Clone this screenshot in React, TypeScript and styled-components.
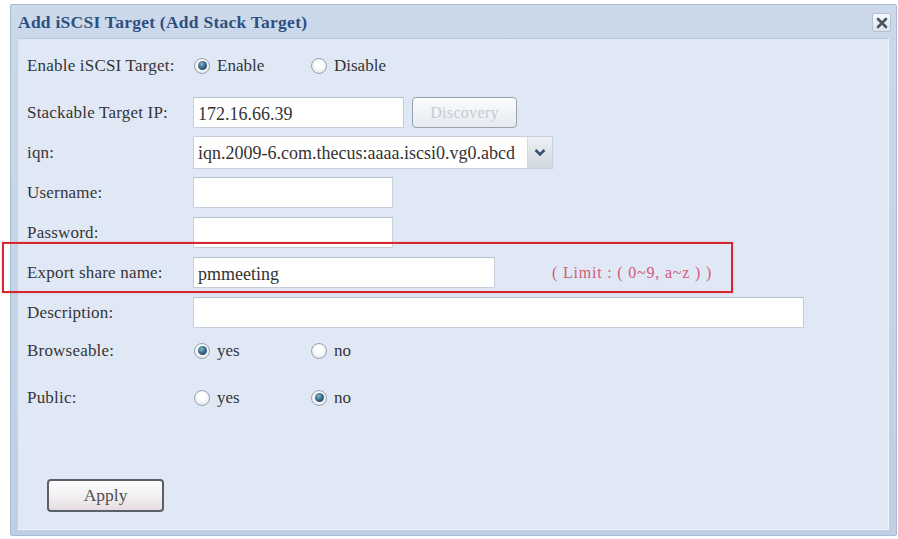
import React from 'react';
import styled, { createGlobalStyle } from 'styled-components';

const GlobalStyle = createGlobalStyle`
  html, body {
    margin: 0;
    padding: 0;
    background: #ffffff;
  }
  body {
    font-family: "Liberation Serif", "Times New Roman", serif;
  }
`;

const Page = styled.div`
  position: relative;
  width: 898px;
  height: 539px;
  padding: 4px 1px 3px 10px;
  box-sizing: border-box;
  background: #ffffff;
`;

const Dialog = styled.div`
  height: 100%;
  display: flex;
  flex-direction: column;
  background: linear-gradient(#ccd9ea, #bfcfe4);
  border: 1px solid #a8bad4;
  border-radius: 2px;
  box-sizing: border-box;
  padding: 0 7px 5px 6px;
`;

const TitleBar = styled.div`
  flex: none;
  height: 33px;
  display: flex;
  align-items: center;
  justify-content: space-between;
  padding: 0 0 0 1px;
`;

const Title = styled.div`
  font-size: 17.5px;
  font-weight: bold;
  letter-spacing: 0.25px;
  color: #2f4f80;
  margin-top: 1px;
`;

const CloseButton = styled.div`
  width: 19px;
  height: 19px;
  margin: 2px -2px 0 0;
  display: flex;
  align-items: center;
  justify-content: center;
  background: linear-gradient(#f6f8fb, #dde4ee);
  border: 1px solid #b3c1d4;
  border-radius: 2px;
  box-sizing: border-box;
`;

const Panel = styled.div`
  flex: 1;
  min-height: 0;
  display: flex;
  flex-direction: column;
  background: #e0e8f6;
  border: 1px solid #eef3fb;
  border-top-color: #b8c8de;
  border-left-color: #c4d2e6;
  padding: 11px 0 0 9px;
`;

const Row = styled.div<{ $mt?: number }>`
  flex: none;
  display: flex;
  align-items: center;
  height: 31px;
  margin-top: ${p => p.$mt ?? 9}px;
`;

const Label = styled.div`
  width: 166px;
  flex: none;
  font-size: 17px;
  letter-spacing: 0.2px;
  color: #353535;
`;

const Input = styled.div<{ $w: number }>`
  width: ${p => p.$w}px;
  height: 31px;
  box-sizing: border-box;
  background: #ffffff;
  border: 1px solid #c6cfdb;
  border-top-color: #b4bfcd;
  display: flex;
  align-items: center;
  padding: 4px 0 0 4px;
  font-size: 18px;
  color: #333;
`;

const Select = styled.div`
  width: 360px;
  height: 33px;
  box-sizing: border-box;
  background: #ffffff;
  border: 1px solid #c6cfdb;
  display: flex;
  align-items: stretch;
  font-size: 18px;
  color: #333;
`;

const SelectText = styled.div`
  flex: 1;
  display: flex;
  align-items: center;
  padding: 2px 0 0 4px;
  white-space: nowrap;
  overflow: hidden;
`;

const SelectArrow = styled.div`
  width: 24px;
  display: flex;
  align-items: center;
  justify-content: center;
  background: linear-gradient(#eef1f5, #d2d8df);
  border-left: 1px solid #d6dce4;
`;

const DiscoveryButton = styled.div`
  margin-left: 8px;
  width: 105px;
  height: 31px;
  box-sizing: border-box;
  border: 1px solid #97a2ae;
  border-radius: 4px;
  background: linear-gradient(#fbfcfd, #e6eaef);
  display: flex;
  align-items: center;
  justify-content: center;
  font-size: 16px;
  letter-spacing: 0.3px;
  color: #c4cbd4;
`;

const RadioGroup = styled.div`
  display: flex;
  align-items: center;
`;

const RadioOption = styled.div`
  width: 117px;
  display: flex;
  align-items: center;
  font-size: 17px;
  color: #353535;
`;

const RadioCircle = styled.span<{ $on?: boolean }>`
  width: 16px;
  height: 16px;
  margin: 0 7px 0 1px;
  border-radius: 50%;
  box-sizing: border-box;
  border: 1px solid #9aa3ad;
  background: radial-gradient(circle at 50% 40%, #ffffff 30%, #d9dee5 100%);
  display: flex;
  align-items: center;
  justify-content: center;

  &::after {
    content: '';
    display: ${p => (p.$on ? 'block' : 'none')};
    width: 9px;
    height: 9px;
    border-radius: 50%;
    background: radial-gradient(circle at 40% 35%, #86b6cc 0%, #2c5f80 55%, #1d3d58 100%);
  }
`;

const LimitNote = styled.div`
  margin-left: 57px;
  font-size: 16px;
  color: #d45a76;
  letter-spacing: 0.8px;
  white-space: pre;
`;

const ApplyButton = styled.div`
  flex: none;
  margin: 66px 0 0 20px;
  width: 117px;
  height: 33px;
  box-sizing: border-box;
  border: 2px solid #5a6068;
  border-radius: 4px;
  background: linear-gradient(#fdfdfe 0%, #f3f0f2 50%, #e6dde2 100%);
  display: flex;
  align-items: center;
  justify-content: center;
  font-size: 17.5px;
  color: #505050;
`;

const Highlight = styled.div`
  position: absolute;
  left: 2px;
  top: 242px;
  width: 731px;
  height: 51px;
  box-sizing: border-box;
  border: 2px solid #d8262e;
  box-shadow: 0 0 1px rgba(216, 38, 46, 0.5);
  pointer-events: none;
`;

const Radio = ({ on, label }: { on?: boolean; label: string }) => (
  <RadioOption>
    <RadioCircle $on={on} />
    {label}
  </RadioOption>
);

export default function App() {
  return (
    <>
      <GlobalStyle />
      <Page>
        <Dialog>
          <TitleBar>
            <Title>Add iSCSI Target (Add Stack Target)</Title>
            <CloseButton>
              <svg width="12" height="12" viewBox="0 0 12 12">
                <path d="M2 2 L10 10 M10 2 L2 10" stroke="#4a5562" strokeWidth="2.6" strokeLinecap="round" />
              </svg>
            </CloseButton>
          </TitleBar>
          <Panel>
            <Row $mt={0}>
              <Label>Enable iSCSI Target:</Label>
              <RadioGroup>
                <Radio on label="Enable" />
                <Radio label="Disable" />
              </RadioGroup>
            </Row>
            <Row $mt={16}>
              <Label>Stackable Target IP:</Label>
              <Input $w={211}>172.16.66.39</Input>
              <DiscoveryButton>Discovery</DiscoveryButton>
            </Row>
            <Row>
              <Label>iqn:</Label>
              <Select>
                <SelectText>iqn.2009-6.com.thecus:aaaa.iscsi0.vg0.abcd</SelectText>
                <SelectArrow>
                  <svg width="12" height="9" viewBox="0 0 12 9">
                    <path d="M1.5 2 L6 6.5 L10.5 2" stroke="#34507a" strokeWidth="2.6" fill="none" />
                  </svg>
                </SelectArrow>
              </Select>
            </Row>
            <Row>
              <Label>Username:</Label>
              <Input $w={200} />
            </Row>
            <Row>
              <Label>Password:</Label>
              <Input $w={200} />
            </Row>
            <Row>
              <Label>Export share name:</Label>
              <Input $w={302}>pmmeeting</Input>
              <LimitNote>( Limit : ( 0~9, a~z ) )</LimitNote>
            </Row>
            <Row>
              <Label>Description:</Label>
              <Input $w={611} />
            </Row>
            <Row $mt={7}>
              <Label>Browseable:</Label>
              <RadioGroup>
                <Radio on label="yes" />
                <Radio label="no" />
              </RadioGroup>
            </Row>
            <Row $mt={16}>
              <Label>Public:</Label>
              <RadioGroup>
                <Radio label="yes" />
                <Radio on label="no" />
              </RadioGroup>
            </Row>
            <ApplyButton>Apply</ApplyButton>
          </Panel>
        </Dialog>
        <Highlight />
      </Page>
    </>
  );
}
